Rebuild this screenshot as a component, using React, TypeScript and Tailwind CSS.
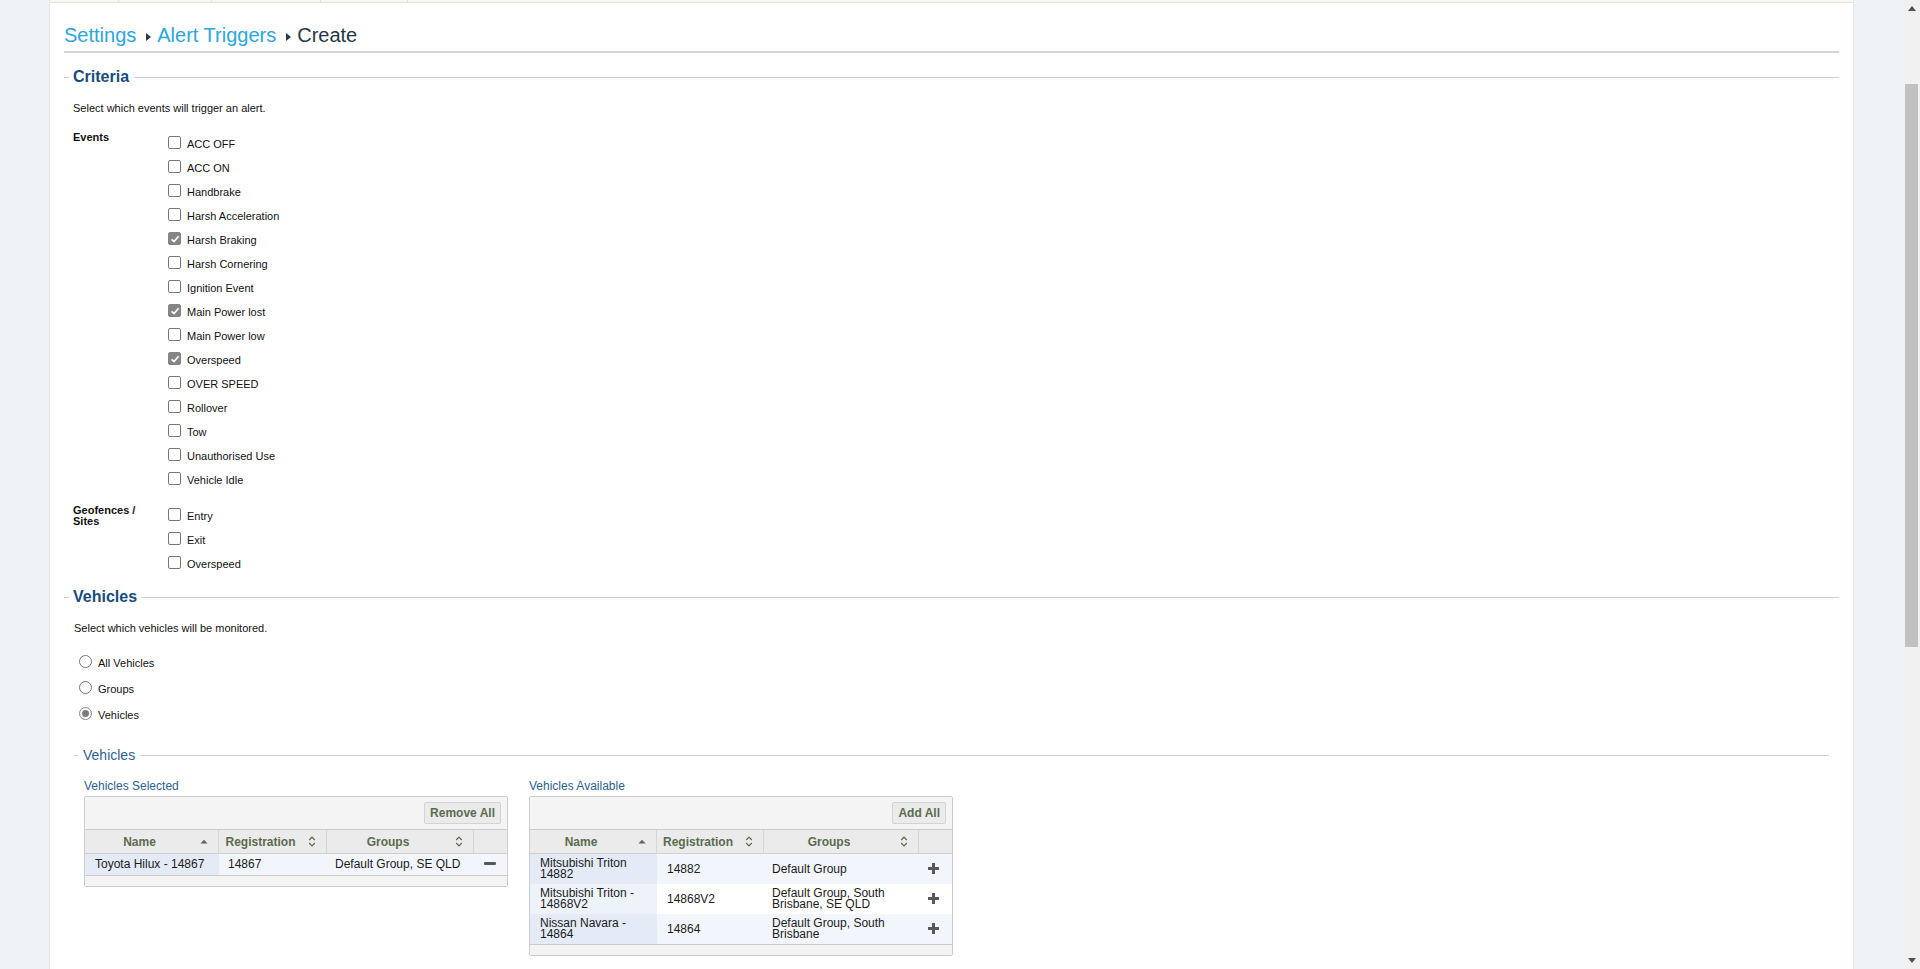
import type { ReactNode } from "react";

const events: { label: string; checked?: boolean }[] = [
  { label: "ACC OFF" },
  { label: "ACC ON" },
  { label: "Handbrake" },
  { label: "Harsh Acceleration" },
  { label: "Harsh Braking", checked: true },
  { label: "Harsh Cornering" },
  { label: "Ignition Event" },
  { label: "Main Power lost", checked: true },
  { label: "Main Power low" },
  { label: "Overspeed", checked: true },
  { label: "OVER SPEED" },
  { label: "Rollover" },
  { label: "Tow" },
  { label: "Unauthorised Use" },
  { label: "Vehicle Idle" },
];

const geofences = ["Entry", "Exit", "Overspeed"];

const available = [
  { name: ["Mitsubishi Triton", "14882"], reg: "14882", groups: ["Default Group"] },
  { name: ["Mitsubishi Triton -", "14868V2"], reg: "14868V2", groups: ["Default Group, South", "Brisbane, SE QLD"] },
  { name: ["Nissan Navara -", "14864"], reg: "14864", groups: ["Default Group, South", "Brisbane"] },
];

function CheckBox({ checked }: { checked?: boolean }) {
  return (
    <span
      className={`mt-[3px] flex h-[13px] w-[13px] shrink-0 items-center justify-center rounded-[2px] border ${
        checked ? "border-[#858585] bg-[#858585]" : "border-[#767676] bg-white"
      }`}
    >
      {checked ? (
        <svg viewBox="0 0 10 10" className="h-[10px] w-[10px]">
          <path d="M1.6 5.3 L4 7.6 L8.6 2.3" fill="none" stroke="#fff" strokeWidth="1.7" />
        </svg>
      ) : null}
    </span>
  );
}

function Radio({ checked }: { checked?: boolean }) {
  return (
    <span
      className={`mt-[3px] flex h-[13px] w-[13px] shrink-0 items-center justify-center rounded-full border bg-white ${
        checked ? "border-[#8a8a8a]" : "border-[#767676]"
      }`}
    >
      {checked ? <span className="h-[7px] w-[7px] rounded-full bg-[#7d7d7d]" /> : null}
    </span>
  );
}

function Legend({ children, big }: { children: ReactNode; big?: boolean }) {
  return (
    <div className={`flex items-center ${big ? "h-[20px]" : "h-[16px]"}`}>
      <span className={`h-px bg-[#cfcfcf] ${big ? "w-[5px]" : "w-[4px]"}`} />
      <span
        className={
          big
            ? "ml-[4px] text-[16px] font-bold leading-[20px] text-[#164c7e]"
            : "ml-[5px] text-[14px] leading-[16px] text-[#2b5f8f]"
        }
      >
        {children}
      </span>
      <span className="ml-[5px] h-px flex-1 bg-[#cfcfcf]" />
    </div>
  );
}

function SortUp() {
  return (
    <svg viewBox="0 0 8 5" className="h-[5px] w-[8px]">
      <path d="M0.5 4.5 L4 0.8 L7.5 4.5 Z" fill="#5b6b4f" />
    </svg>
  );
}

function SortBoth() {
  return (
    <svg viewBox="0 0 8 11" className="h-[11px] w-[8px]">
      <path d="M1.2 4 L4 1.2 L6.8 4 M1.2 7 L4 9.8 L6.8 7" fill="none" stroke="#5b6b4f" strokeWidth="1.2" />
    </svg>
  );
}

function HeadCell({ label, icon, last }: { label?: string; icon?: ReactNode; last?: boolean }) {
  return (
    <div className={`flex h-[23px] items-center ${last ? "" : "border-r border-[#d6d6d6]"}`}>
      {label ? (
        <>
          <span className="flex-1 text-center text-[12px] font-bold text-[#5b6b4f]">{label}</span>
          <span className="mr-[4px] flex w-[20px] justify-center">{icon}</span>
        </>
      ) : null}
    </div>
  );
}

function Toolbar({ label }: { label: string }) {
  return (
    <div className="flex h-[33px] items-start justify-end border-b border-[#cccccc] bg-[#f4f4f4] pr-[6px] pt-[5px]">
      <button
        type="button"
        className="h-[22px] rounded-[2px] border border-[#d3d3d3] bg-[#ebebeb] px-[5px] text-[12px] font-bold text-[#5b6b4f]"
      >
        {label}
      </button>
    </div>
  );
}

function PlusIcon() {
  return (
    <svg viewBox="0 0 11 11" className="h-[11px] w-[11px]">
      <path d="M4 0 H7 V4 H11 V7 H7 V11 H4 V7 H0 V4 H4 Z" fill="#585858" />
    </svg>
  );
}

export default function App() {
  return (
    <div className="flex h-[969px] w-full overflow-hidden bg-[#eff3f7] font-['Liberation_Sans',Arial,sans-serif] text-[#111]">
      <div className="w-[49px] shrink-0" />

      <div className="flex w-[1805px] shrink-0 flex-col border-x border-[#e2e7ec] bg-white">
        {/* leftover tab strip */}
        <div className="flex h-[3px] shrink-0 border-b border-[#e3e3d6] bg-[#f8f8f2]">
          <div className="w-[69px] border-r border-[#e3e3d6]" />
          <div className="w-[93px] border-r border-[#e3e3d6]" />
          <div className="w-[109px] border-r border-[#e3e3d6]" />
          <div className="w-[87px] border-r border-[#e3e3d6]" />
        </div>

        <div className="px-[14px]">
          <div className="flex items-center border-b-2 border-[#d5d5d5] pb-[4px] pt-[21px] text-[20px] leading-[23px]">
            <span className="text-[#2ba6de]">Settings</span>
            <svg viewBox="0 0 5 8" className="ml-[10px] mr-[6px] mt-[2px] h-[8px] w-[5px]">
              <path d="M0 0 L5 4 L0 8 Z" fill="#2b3a48" />
            </svg>
            <span className="text-[#2ba6de]">Alert Triggers</span>
            <svg viewBox="0 0 5 8" className="ml-[10px] mr-[6px] mt-[2px] h-[8px] w-[5px]">
              <path d="M0 0 L5 4 L0 8 Z" fill="#2b3a48" />
            </svg>
            <span className="text-[#243746]">Create</span>
          </div>

          {/* Criteria */}
          <div className="mt-[14px]">
            <Legend big>Criteria</Legend>
            <div className="pl-[9px] text-[11px]">
              <p className="mt-[15px] leading-[13px]">Select which events will trigger an alert.</p>

              <div className="mt-[16px] flex">
                <div className="w-[95px] shrink-0 font-bold leading-[13px]">Events</div>
                <div className="pt-[2px]">
                  {events.map((ev) => (
                    <div key={ev.label} className="flex h-[24px] items-start">
                      <CheckBox checked={ev.checked} />
                      <span className="ml-[6px] mt-[5px] leading-[13px]">{ev.label}</span>
                    </div>
                  ))}
                </div>
              </div>

              <div className="mt-[11px] flex">
                <div className="w-[95px] shrink-0 pt-[1px] font-bold leading-[11px]">
                  Geofences /
                  <br />
                  Sites
                </div>
                <div className="pt-[1px]">
                  {geofences.map((g) => (
                    <div key={g} className="flex h-[24px] items-start">
                      <CheckBox />
                      <span className="ml-[6px] mt-[5px] leading-[13px]">{g}</span>
                    </div>
                  ))}
                </div>
              </div>
            </div>
          </div>

          {/* Vehicles */}
          <div className="mt-[10px]">
            <Legend big>Vehicles</Legend>
            <div className="pl-[10px] text-[11px]">
              <p className="mt-[15px] leading-[13px]">Select which vehicles will be monitored.</p>

              <div className="mt-[17px] pl-[5px]">
                {[
                  { label: "All Vehicles" },
                  { label: "Groups" },
                  { label: "Vehicles", checked: true },
                ].map((r) => (
                  <div key={r.label} className="flex h-[26px] items-start">
                    <Radio checked={r.checked} />
                    <span className="ml-[6px] mt-[5px] leading-[13px]">{r.label}</span>
                  </div>
                ))}
              </div>

              <div className="mr-[10px] mt-[17px]">
                <Legend>Vehicles</Legend>
                <div className="flex items-start gap-[21px] pl-[10px]">
                  {/* selected */}
                  <div className="w-[424px]">
                    <div className="mt-[16px] text-[12px] leading-[14px] text-[#2b5f8f]">Vehicles Selected</div>
                    <div className="mt-[3px] overflow-hidden rounded-[2px] border border-[#cccccc]">
                      <Toolbar label="Remove All" />
                      <div className="grid grid-cols-[134px_108px_147px_33px] border-b border-[#d0d0d0] bg-[#ebebeb]">
                        <HeadCell label="Name" icon={<SortUp />} />
                        <HeadCell label="Registration" icon={<SortBoth />} />
                        <HeadCell label="Groups" icon={<SortBoth />} />
                        <HeadCell last />
                      </div>
                      <div className="grid h-[21px] grid-cols-[134px_108px_147px_33px] text-[12px] leading-[11px] text-[#1b1b1b]">
                        <div className="flex items-center bg-[#e4ebf6] pl-[10px]">Toyota Hilux - 14867</div>
                        <div className="flex items-center bg-[#f2f6fc] pl-[9px]">14867</div>
                        <div className="flex items-center bg-[#f2f6fc] pl-[8px]">Default Group, SE QLD</div>
                        <div className="flex items-center justify-center bg-[#f2f6fc] pb-[3px] pr-[2px]">
                          <span className="h-[3px] w-[12px] rounded-[1px] bg-[#585858]" />
                        </div>
                      </div>
                      <div className="h-[11px] border-t border-[#cccccc] bg-[#f3f3f3]" />
                    </div>
                  </div>

                  {/* available */}
                  <div className="w-[424px]">
                    <div className="mt-[16px] text-[12px] leading-[14px] text-[#2b5f8f]">Vehicles Available</div>
                    <div className="mt-[3px] overflow-hidden rounded-[2px] border border-[#cccccc]">
                      <Toolbar label="Add All" />
                      <div className="grid grid-cols-[127px_107px_155px_33px] border-b border-[#d0d0d0] bg-[#ebebeb]">
                        <HeadCell label="Name" icon={<SortUp />} />
                        <HeadCell label="Registration" icon={<SortBoth />} />
                        <HeadCell label="Groups" icon={<SortBoth />} />
                        <HeadCell last />
                      </div>
                      {available.map((v, i) => {
                        const odd = i % 2 === 0;
                        const cell = odd ? "bg-[#f2f6fc]" : "bg-white";
                        return (
                          <div
                            key={v.reg}
                            className="grid h-[30px] grid-cols-[127px_107px_155px_33px] text-[12px] leading-[11px] text-[#1b1b1b]"
                          >
                            <div className={`flex flex-col justify-center pl-[10px] ${odd ? "bg-[#e4ebf6]" : "bg-[#eef3fa]"}`}>
                              {v.name.map((l) => (
                                <span key={l}>{l}</span>
                              ))}
                            </div>
                            <div className={`flex items-center pl-[10px] ${cell}`}>{v.reg}</div>
                            <div className={`flex flex-col justify-center pl-[8px] ${cell}`}>
                              {v.groups.map((l) => (
                                <span key={l}>{l}</span>
                              ))}
                            </div>
                            <div className={`flex items-center justify-center pb-[2px] pr-[4px] ${cell}`}>
                              <PlusIcon />
                            </div>
                          </div>
                        );
                      })}
                      <div className="h-[11px] border-t border-[#cccccc] bg-[#f3f3f3]" />
                    </div>
                  </div>
                </div>
              </div>
            </div>
          </div>
        </div>
      </div>

      <div className="flex-1" />

      {/* scrollbar */}
      <div className="flex w-[17px] shrink-0 flex-col bg-[#f1f1f1]">
        <div className="flex h-[17px] items-center justify-center">
          <svg viewBox="0 0 8 5" className="h-[5px] w-[8px]">
            <path d="M0 5 L4 0 L8 5 Z" fill="#505050" />
          </svg>
        </div>
        <div className="flex-1 px-[2px]">
          <div className="mt-[67px] h-[563px] bg-[#c1c1c1]" />
        </div>
        <div className="flex h-[17px] items-center justify-center">
          <svg viewBox="0 0 8 5" className="h-[5px] w-[8px]">
            <path d="M0 0 L4 5 L8 0 Z" fill="#505050" />
          </svg>
        </div>
      </div>
    </div>
  );
}
